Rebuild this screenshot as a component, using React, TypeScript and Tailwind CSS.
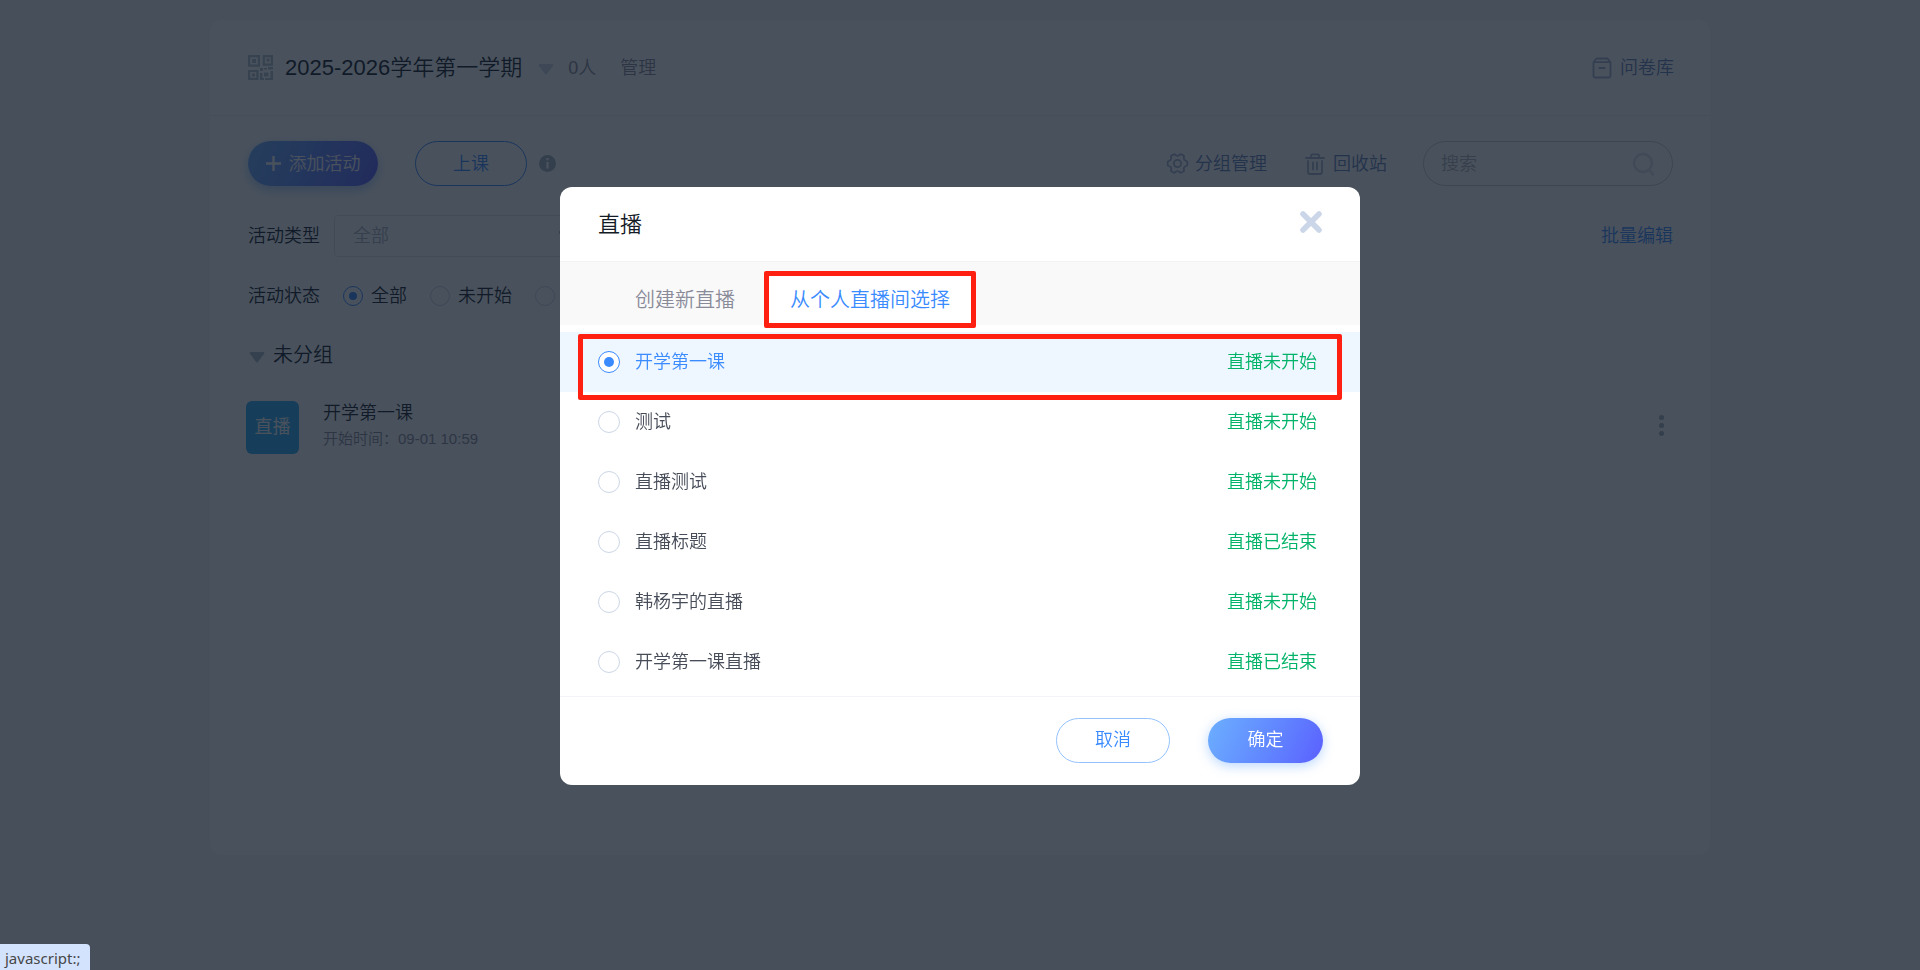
import { useState } from "react";

const rooms = [
  { name: "开学第一课", status: "直播未开始" },
  { name: "测试", status: "直播未开始" },
  { name: "直播测试", status: "直播未开始" },
  { name: "直播标题", status: "直播已结束" },
  { name: "韩杨宇的直播", status: "直播未开始" },
  { name: "开学第一课直播", status: "直播已结束" },
];

const QrIcon = () => (
  <svg width="25" height="25" viewBox="0 0 25 25" fill="none" stroke="#b4c2cc" strokeWidth="2.2" className="shrink-0">
    <path d="M1.100 1.100h9.800v9.500H1.100zM15.800 1.100h8.100v8.500h-8.100zM1.100 16h8.300v7.900H1.100z" />
    <path
      d="M4 4h4v4H4zM18.500 3.500h3v3h-3zM4 18.500h3v3H4zM12 13h3v3h-3zM16 17.500h4.500v4H16zM20 12h5v2.500h-5zM16 13h3v1.500h-3zM22.500 16H25v9h-8v-2h5.500zM12 18h2.500v5H16v2h-4z"
      fill="#b4c2cc"
      stroke="none"
    />
  </svg>
);

const BoxIcon = () => (
  <svg width="20" height="22" viewBox="0 0 20 22" fill="none" stroke="#a3b3cd" strokeWidth="1.8" strokeLinejoin="round">
    <path d="M1.500 5.200 4.500 1.500h11l3 3.700V19a1.500 1.500 0 0 1-1.500 1.500H3A1.500 1.500 0 0 1 1.500 19zM1.500 5.200h17M6.500 11h7" />
  </svg>
);

const GearIcon = () => (
  <svg width="23" height="23" viewBox="0 0 24 24" fill="none" stroke="#a3b3cd" strokeWidth="1.9" strokeLinejoin="round">
    <path d="M8.800 2.200Q10.500 4 12 4t3.200-1.800q2 .6 3.700 2.100-.9 2.700 0 3.700t3.200 1.900q.5 2.100 0 4.200-2.400.9-3.200 1.900t0 3.700q-1.700 1.500-3.700 2.100Q13.500 20 12 20t-3.200 1.800q-2-.6-3.700-2.100.9-2.700 0-3.700t-3.200-1.900q-.5-2.100 0-4.200 2.400-.9 3.200-1.900t0-3.700Q6.800 2.800 8.800 2.200z" />
    <circle cx="12" cy="12" r="3.800" />
  </svg>
);

const TrashIcon = () => (
  <svg width="20" height="22" viewBox="0 0 20 22" fill="none" stroke="#a3b3cd" strokeWidth="1.800" strokeLinecap="round" strokeLinejoin="round">
    <path d="M1 5h18M6 5V2.500A1.200 1.200 0 0 1 7.200 1.300h5.600A1.200 1.200 0 0 1 14 2.500V5M3 8v11a2 2 0 0 0 2 2h10a2 2 0 0 0 2-2V8M8 9.500v7M12 9.500v7" />
  </svg>
);

const Triangle = ({ color }: { color: string }) => (
  <svg width="16" height="11" viewBox="0 0 16 11" fill={color} className="shrink-0">
    <path d="M1.500 0h13q1.500.5.5 2L9 10q-1 1-2 0L1 2Q0 .5 1.500 0z" />
  </svg>
);

const radio =
  "grid shrink-0 appearance-none place-items-center rounded-full border before:rounded-full before:bg-[#3a8bff] before:content-[''] border-[#cbd6e6] checked:border-[#3a8bff]";

const Course = () => {
  return (
    <main className="mx-auto min-h-[835px] max-w-[1500px] rounded-xl bg-white">
      <header className="flex h-24 items-center border-b border-[#f2f2f2] pr-9 pl-[38px]">
        <QrIcon />
        <h1 className="ml-3 text-[22px] text-[#131b26]">2025-2026学年第一学期</h1>
        <span className="ml-4 pt-1">
          <Triangle color="#cbd6e4" />
        </span>
        <span className="ml-3.5 text-lg text-[#8a8b99]">0人</span>
        <a href="#manage" className="ml-6 text-lg text-[#8a8b99]">
          管理
        </a>
        <a href="#survey" className="ml-auto flex items-center gap-2 text-lg text-[#6581ba]">
          <BoxIcon />
          问卷库
        </a>
      </header>

      <div className="flex items-center pt-[25px] pr-[37px] pl-[38px]">
        <button className="flex h-[45px] w-[130px] items-center justify-center gap-2 rounded-full bg-linear-115 from-[#6cafff] to-[#5b5fff] text-lg text-white shadow-[0_4px_12px_rgba(58,139,255,0.4)]">
          <svg width="15" height="15" viewBox="0 0 15 15" stroke="white" strokeWidth="2.4">
            <path d="M7.500 0v15M0 7.500h15" />
          </svg>
          添加活动
        </button>
        <button className="ml-[37px] h-[45px] w-[112px] rounded-full border border-[#3a8bff] text-lg text-[#3a8bff]">
          上课
        </button>
        <svg width="17" height="17" viewBox="0 0 17 17" className="ml-3">
          <circle cx="8.500" cy="8.500" r="8.500" fill="#a8b5bf" />
          <path d="M8.500 3v2.200M8.500 7v6.500" stroke="white" strokeWidth="2.200" />
        </svg>
        <div className="ml-auto flex items-center text-lg text-[#6581ba]">
          <a href="#groups" className="flex items-center gap-1.5">
            <GearIcon />
            分组管理
          </a>
          <a href="#trash" className="ml-[38px] flex items-center gap-2">
            <TrashIcon />
            回收站
          </a>
          <div className="ml-9 flex h-[45px] w-[250px] items-center rounded-full border border-[#c9ccd1] px-[17px]">
            <input
              type="text"
              aria-label="搜索"
              placeholder="搜索"
              className="w-full min-w-0 bg-transparent outline-none placeholder:text-[#b1b3b8]"
            />
            <svg width="23" height="24" viewBox="0 0 23 24" fill="none" stroke="#dce1e6" strokeWidth="2.800" strokeLinecap="round" className="shrink-0">
              <circle cx="11" cy="11" r="9" />
              <path d="m17.500 18 3.500 4.500" />
            </svg>
          </div>
        </div>
      </div>

      <div className="flex items-center pt-[29px] pr-[37px] pl-[38px] text-lg">
        <label htmlFor="type" className="text-[#131b26]">
          活动类型
        </label>
        <div className="relative ml-3.5">
          <select
            id="type"
            className="h-[42px] w-60 appearance-none rounded-sm border border-[#e1e3e5] bg-white pl-[18px] text-[#acb4bf]"
          >
            <option>全部</option>
          </select>
          <span className="pointer-events-none absolute top-4 right-0">
            <Triangle color="#acb4bf" />
          </span>
        </div>
        <a href="#batch" className="ml-auto text-[#3a8bff]">
          批量编辑
        </a>
      </div>

      <fieldset className="flex h-[78px] items-center pl-[38px] text-lg text-[#131b26]">
        <span className="mr-[23px]">活动状态</span>
        <label className="mr-[23px] flex items-center gap-2">
          <input type="radio" name="state" defaultChecked className={`${radio} size-5 checked:before:size-2`} />
          全部
        </label>
        <label className="mr-[23px] flex items-center gap-2">
          <input type="radio" name="state" className={`${radio} size-5 checked:before:size-2`} />
          未开始
        </label>
        <input type="radio" name="state" aria-label="进行中" className={`${radio} size-5 checked:before:size-2`} />
      </fieldset>

      <h2 className="flex h-10 items-center gap-2 pl-[39px] text-xl text-[#131b26]">
        <span className="pt-1">
          <Triangle color="#afbdc7" />
        </span>
        未分组
      </h2>

      <div className="flex items-center pt-6 pr-[46px] pl-9">
        <span className="flex size-[53px] items-center justify-center rounded-md bg-[#2ab0f5] text-lg font-normal text-white">
          直播
        </span>
        <div className="ml-6 pb-1">
          <p className="text-lg leading-7 text-[#131b26]">开学第一课</p>
          <p className="text-[15px] leading-6 text-[#8a8b99]">开始时间：09-01 10:59</p>
        </div>
        <button aria-label="更多" className="ml-auto flex flex-col gap-[3px] pb-1">
          <i className="size-[5px] rounded-full bg-[#a5b3bd]" />
          <i className="size-[5px] rounded-full bg-[#a5b3bd]" />
          <i className="size-[5px] rounded-full bg-[#a5b3bd]" />
        </button>
      </div>
    </main>
  );
};

const LiveDialog = () => {
  const [picked, setPicked] = useState(0);

  return (
    <div className="fixed inset-0 flex items-center justify-center bg-[#101a29]/76 pt-0.5">
      <section role="dialog" aria-labelledby="live-title" className="w-full max-w-[800px] rounded-xl bg-white">
        <header className="flex h-[75px] items-center justify-between border-b border-[#f2f2f2] px-[38px]">
          <h2 id="live-title" className="text-[22px] text-[#131b26]">
            直播
          </h2>
          <button aria-label="关闭" className="pb-1">
            <svg width="22" height="22" viewBox="0 0 22 22" stroke="#cbd6e8" strokeWidth="5.500" strokeLinecap="round">
              <path d="m3 3 16 16M19 3 3 19" />
            </svg>
          </button>
        </header>

        <nav className="relative z-10 flex h-[63px] items-start bg-[#f9f9f9] pt-[9px] pl-[75px] text-xl">
          <button className="h-[57px] text-[#8a8b99]">创建新直播</button>
          <button className="ml-[29px] h-[57px] rounded-xs border-[5px] border-[#ff2012] bg-white px-[21px] text-[#3a8bff]">
            从个人直播间选择
          </button>
        </nav>

        <div className="relative border-b border-[#f2f4fa] pt-[7px] pb-1">
          <ul>
            {rooms.map((room, i) => (
              <li key={room.name}>
                <label
                  className={`flex h-[60px] items-center pr-[43px] pl-[38px] text-lg ${
                    picked === i ? "bg-[#eef6ff] text-[#3a8bff]" : "text-[#474c59]"
                  }`}
                >
                  <input
                    type="radio"
                    name="room"
                    checked={picked === i}
                    onChange={() => setPicked(i)}
                    className={`${radio} mr-[15px] size-[22px] bg-white checked:before:size-2.5`}
                  />
                  {room.name}
                  <span className="ml-auto text-[#00b368]">{room.status}</span>
                </label>
              </li>
            ))}
          </ul>
          <div className="pointer-events-none absolute inset-x-[18px] top-[9px] h-[66px] rounded-xs border-[5px] border-[#ff2012]" />
        </div>

        <footer className="flex h-[88px] items-center justify-end gap-[38px] pr-[37px] pb-0.5 text-lg">
          <button className="h-[45px] w-[114px] rounded-full border border-[#94c1ff] text-[#3a8bff]">取消</button>
          <button className="h-[45px] w-[115px] rounded-full bg-linear-115 from-[#6cafff] to-[#5b5fff] text-white shadow-[0_3px_12px_rgba(58,139,255,0.35)]">
            确定
          </button>
        </footer>
      </section>
    </div>
  );
};

export default function App() {
  return (
    <div className="min-h-screen bg-[#f4f4f6] pt-5 font-['Liberation_Sans','Noto_Sans_CJK_SC',sans-serif] font-[350]">
      <Course />
      <LiveDialog />
      <div className="fixed bottom-0 left-0 h-[26px] rounded-tr-sm bg-[#d3e3fd] pr-2.5 pl-[5px] font-['Noto_Sans',sans-serif] text-[15px] leading-[28px] font-normal text-[#474747]">
        javascript:;
      </div>
    </div>
  );
}
